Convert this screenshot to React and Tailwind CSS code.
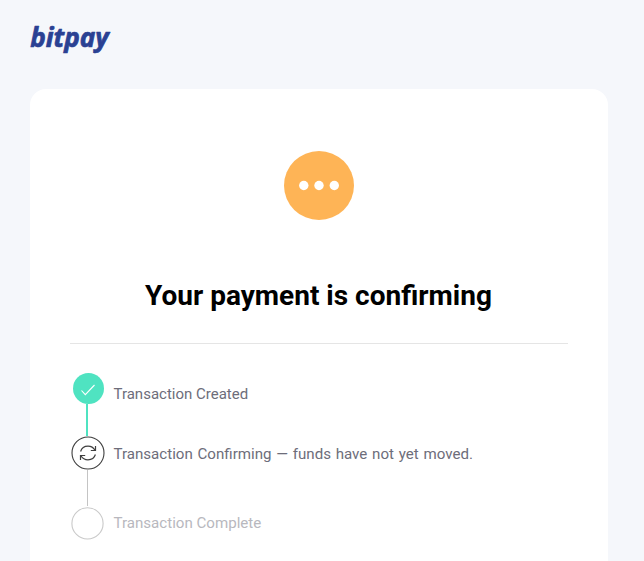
import clsx from 'clsx'

const STEPS = [
  { label: 'Transaction Created', status: 'done' },
  { label: 'Transaction Confirming — funds have not yet moved.', status: 'active' },
  { label: 'Transaction Complete', status: 'pending' },
]

function Logo() {
  return (
    <svg width="100" height="50" viewBox="0 0 100 50" className="block overflow-visible" role="img" aria-label="bitpay">
      <text
        x="0.3"
        y="29.8"
        textLength="78.5"
        lengthAdjust="spacingAndGlyphs"
        className="fill-[#2a4193] stroke-[#2a4193] font-['Noto_Sans',sans-serif] text-[26.5px] leading-none font-bold italic"
        strokeWidth="0.7"
        strokeLinejoin="round"
      >
        bitpay
      </text>
    </svg>
  )
}

function PendingBadge() {
  return (
    <svg width="70" height="70" viewBox="0 0 70 70" className="block">
      <ellipse cx="35" cy="34.5" rx="35" ry="34.5" fill="#feb456" />
      <circle cx="19.8" cy="34.5" r="4.7" fill="#fff" />
      <circle cx="35" cy="34.5" r="4.7" fill="#fff" />
      <circle cx="50.3" cy="34.5" r="4.7" fill="#fff" />
    </svg>
  )
}

function StepIcon({ status }) {
  if (status === 'done') {
    return (
      <svg width="34" height="31" viewBox="0 0 34 31" className="block">
        <circle cx="17.5" cy="15.5" r="15.5" fill="#4fe3c1" />
        <path d="M10.5 17.5 L14.3 21.6 L23.5 12" fill="none" stroke="#fff" strokeWidth="1.1" />
      </svg>
    )
  }

  if (status === 'active') {
    return (
      <svg width="34" height="34" viewBox="0 0 34 34" className="block" fill="none" stroke="#3f3f3f">
        <circle cx="17" cy="17" r="16" strokeWidth="1.1" />
        <g strokeWidth="1.2">
          <path d="M9.6 15.5 C10.6 12.1 13.5 10.2 17 10.2 C20 10.2 22.5 11.6 24 14.3" />
          <path d="M24.5 10 V14.5 H19.8" />
          <path d="M24.4 18.5 C23.4 21.9 20.5 23.8 17 23.8 C14 23.8 11.5 22.4 10 19.7" />
          <path d="M9.5 24 V19.5 H14.2" />
        </g>
      </svg>
    )
  }

  return (
    <svg width="34" height="34" viewBox="0 0 34 34" className="block">
      <circle cx="16.5" cy="17.4" r="15.6" fill="none" stroke="#c9c9c9" strokeWidth="1.1" />
    </svg>
  )
}

function Step({ label, status }) {
  return (
    <li className="flex">
      <div className="flex w-[34px] flex-col">
        <StepIcon status={status} />
        {status === 'done' && <div className="ml-[15px] h-[32px] w-[2px] bg-[#4fe3c1]" />}
        {status === 'active' && <div className="ml-4 h-9 w-px bg-[#c4c4c4]" />}
      </div>
      <span
        className={clsx(
          "ml-[8.5px] font-['Roboto',sans-serif] leading-[20px] whitespace-nowrap",
          status === 'done' && 'mt-[11px] text-[15px] text-[#6d6d7a]',
          status === 'active' && 'mt-2 text-[15.1px] text-[#6d6d7a] [word-spacing:1px]',
          status === 'pending' && 'mt-[7px] text-[15.1px] text-[#b8b8be]'
        )}
      >
        {label}
      </span>
    </li>
  )
}

export default function App() {
  return (
    <div className="h-screen overflow-hidden bg-[#f5f7fb] pr-9 pl-[30px]">
      <header className="h-[89px] pt-[17px]">
        <Logo />
      </header>

      <main className="h-[520px] rounded-2xl bg-white px-10 pt-[62px]">
        <div className="flex justify-center">
          <PendingBadge />
        </div>

        <h1 className="mt-[58px] pr-px text-center font-['Roboto',sans-serif] text-[28px] leading-[34px] font-bold text-black">
          Your payment is confirming
        </h1>

        <hr className="mt-[30px] border-[#e5e5e5]" />

        <ul className="mt-[29px] ml-px">
          {STEPS.map((step) => (
            <Step key={step.label} {...step} />
          ))}
        </ul>
      </main>
    </div>
  )
}
